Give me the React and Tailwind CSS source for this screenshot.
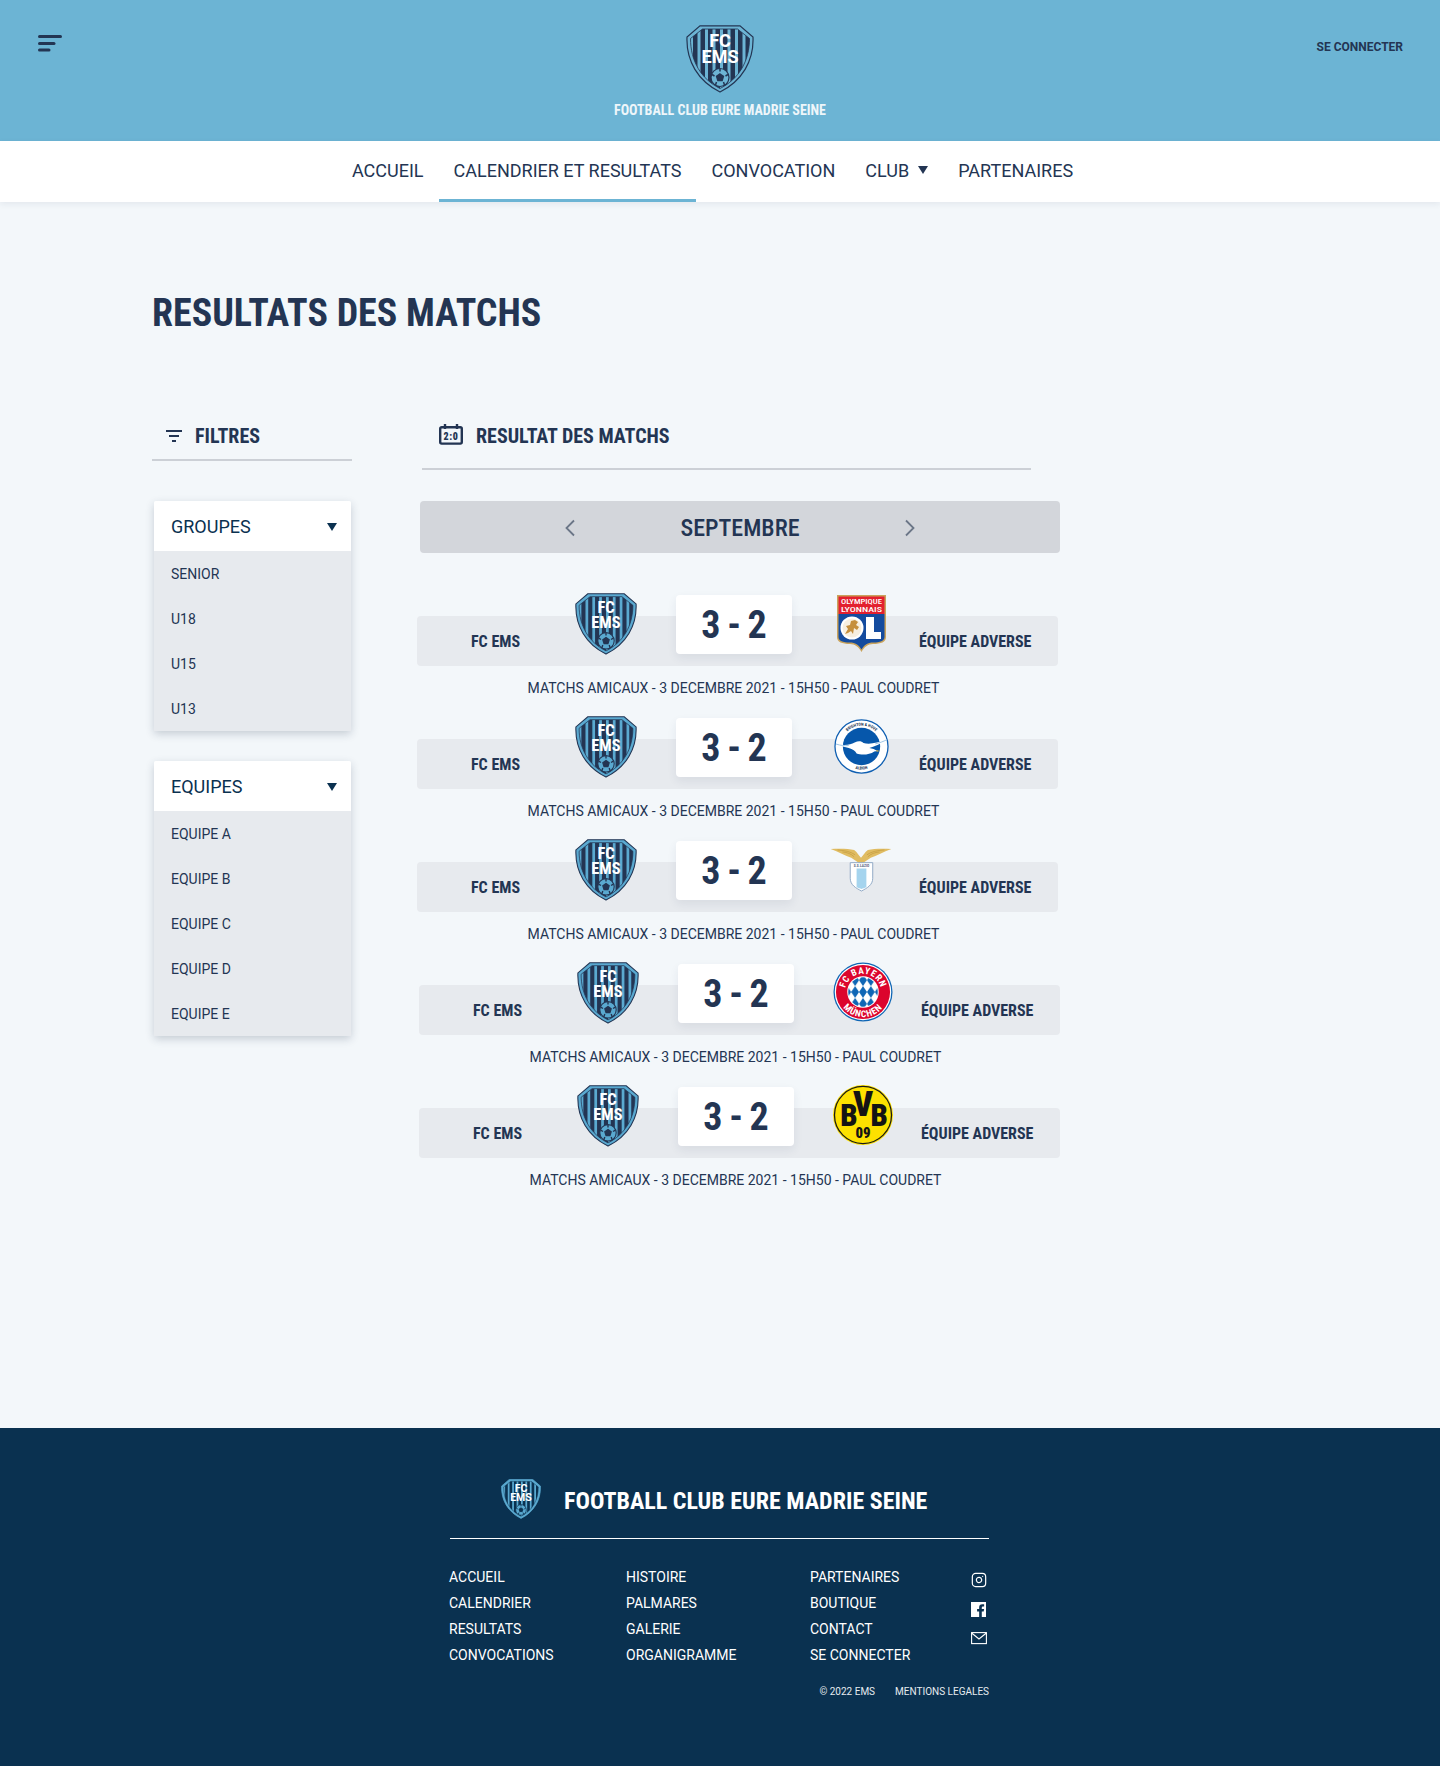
import React from "react";
import { Instagram } from "lucide-react";

const cond = "font-['Roboto',sans-serif] font-bold [font-stretch:75%]";

function Shield({ id, size = 62, dark = "#233553", light = "#5aa9d0", edge = "#233553", band }) {
  const xs = [7, 14.5, 22, 29.5, 37, 44.5, 52, 59.5];
  return (
    <svg width={size} height={size} viewBox="0 0 68 68" className="block shrink-0">
      <defs>
        <clipPath id={id}>
          <path d="M16.500 4 H51.500 L63.500 13.500 C63.500 36 53 54 34 63.500 C15 54 4.500 36 4.500 13.500 Z" />
        </clipPath>
      </defs>
      <path d="M14 .8 H54 L67 12 C68 36 56 56 34 67 C12 56 0 36 1 12 Z" fill={band || light} stroke={edge} strokeWidth="1.200" />
      <g clipPath={`url(#${id})`}>
        <rect x="0" y="0" width="68" height="68" fill={light} />
        {xs.map((x) => (
          <rect key={x} x={x} y="0" width="4.500" height="68" fill={dark} />
        ))}
      </g>
      <path d="M16.500 4 H51.500 L63.500 13.500 C63.500 36 53 54 34 63.500 C15 54 4.500 36 4.500 13.500 Z" fill="none" stroke={dark} strokeWidth=".8" />
      <text x="34" y="22" textAnchor="middle" fontFamily="Roboto, sans-serif" fontWeight="700" fontSize="18" fill="#fff">FC</text>
      <text x="34" y="38" textAnchor="middle" fontFamily="Roboto, sans-serif" fontWeight="700" fontSize="18" fill="#fff">EMS</text>
      <circle cx="34" cy="52.500" r="9" fill={light} stroke={dark} strokeWidth="1.200" />
      <path d="M34 49 l3.400 2.400 -1.300 4 h-4.200 l-1.300 -4 Z M34 44 v2.500 M26 49.500 l2.500 1.500 M42 49.500 l-2.500 1.500 M29.500 60 l1 -3 M38.500 60 l-1 -3" fill={dark} stroke={dark} strokeWidth="1.500" />
    </svg>
  );
}

function Lyon() {
  return (
    <svg width="49" height="57" viewBox="0 0 49 57" className="mt-[3px] block">
      <path d="M0 0 H49 V42 C49 47 44 49 36 49 C31 49 27 52 24.500 57 C22 52 18 49 13 49 C5 49 0 47 0 42 Z" fill="#c9a35c" />
      <path d="M1.500 1.500 H47.500 V19 H1.500 Z" fill="#e3202e" />
      <path d="M1.500 19 H47.500 V42 C47.500 46 43 47.500 36 47.500 C31 47.500 27 50 24.500 54.500 C22 50 18 47.500 13 47.500 C6 47.500 1.500 46 1.500 42 Z" fill="#144b9e" />
      <text x="24.500" y="9.200" textAnchor="middle" textLength="41" lengthAdjust="spacingAndGlyphs" fontFamily="Roboto, sans-serif" fontWeight="500" fontSize="8" fill="#fff">OLYMPIQUE</text>
      <text x="24.500" y="17" textAnchor="middle" textLength="41" lengthAdjust="spacingAndGlyphs" fontFamily="Roboto, sans-serif" fontWeight="500" fontSize="8" fill="#fff">LYONNAIS</text>
      <circle cx="15" cy="33" r="11.500" fill="#fff" />
      <circle cx="15" cy="33" r="9.500" fill="#f7efe0" />
      <path d="M8 39 l3 -5 -2 -3 4 -1 1 -4 4 -1 3 2 -2 3 3 2 -2 3 -3 -2 -1 6 -2 -3 -3 2 Z" fill="#c58f3d" />
      <path d="M29 22 H37 V37 H44 V44 H29 Z" fill="#fff" />
    </svg>
  );
}

function Brighton({ id }) {
  return (
    <svg width="55" height="55" viewBox="0 0 56 56" className="mt-[4px] block">
      <defs>
        <path id={`${id}t`} d="M6.800 28 A21.200 21.200 0 0 1 49.200 28" />
        <path id={`${id}b`} d="M4.500 28 A23.500 23.500 0 0 0 51.500 28" />
      </defs>
      <circle cx="28" cy="28" r="27" fill="#fff" stroke="#0f5fb2" strokeWidth="1.300" />
      <circle cx="28" cy="28" r="19" fill="#0657ab" />
      <text fontFamily="Roboto, sans-serif" fontWeight="700" fontSize="4.200" fill="#233553"><textPath href={`#${id}t`} startOffset="50%" textAnchor="middle">BRIGHTON & HOVE</textPath></text>
      <text fontFamily="Roboto, sans-serif" fontWeight="700" fontSize="4.200" fill="#233553"><textPath href={`#${id}b`} startOffset="50%" textAnchor="middle">ALBION</textPath></text>
      <path d="M3 26 C12 27 17 26.500 21 24 C25 22 28 22.500 30 24.500 C36 26 44 24.500 53 21.500 C48 25 42 28 36 29.500 C39 30 42 31 44 32.500 L41 33 C36 36.500 28 37 23 35 C22 32.500 19 31 15 29.500 C11 28.500 7 27.500 3 26 Z" fill="#fff" />
      <path d="M2 25.500 C7 27 11 27.500 15 27 M54 21 C50 23 46 24.500 42 25.300" fill="none" stroke="#9cc4e4" strokeWidth="1" />
      <path d="M43 31.500 l3.500 1 -3 .8 Z" fill="#e9b73d" />
    </svg>
  );
}

function Lazio() {
  return (
    <svg width="62" height="44" viewBox="0 0 62 45" className="mt-[10px] block shrink-0">
      <path d="M0 1 C8 .5 18 .5 24 2 C27 4 29 8 31 10 C33 8 35 4 38 2 C44 .5 54 .5 62 1 C54 4 47 8 41 10 C38 12 35 14 31 17 C27 14 24 12 21 10 C15 8 8 4 0 1 Z" fill="#e0bc62" />
      <path d="M7 2 C15 2.500 21 4 25 7 M12 4 C17 4.500 21 6 24 9 M55 2 C47 2.500 41 4 37 7 M50 4 C45 4.500 41 6 38 9" stroke="#c39a3c" strokeWidth=".7" fill="none" />
      <path d="M20 15 H43 V31 C43 38 37 41 31.500 44 C26 41 20 38 20 31 Z" fill="#fff" stroke="#8fa9c6" strokeWidth="1" />
      <path d="M26.500 21 H36.500 V40 C34.500 41 33 41.500 31.500 42 C30 41.500 28.500 41 26.500 40 Z" fill="#a5d4ee" />
      <text x="31.500" y="19.500" textAnchor="middle" fontFamily="Roboto, sans-serif" fontWeight="700" fontSize="3.800" fill="#54657e">S.S.LAZIO</text>
    </svg>
  );
}

function Bayern({ id }) {
  return (
    <svg width="60" height="60" viewBox="0 0 61 61" className="mt-[1px] block">
      <defs>
        <pattern id={`${id}p`} width="8" height="12" patternUnits="userSpaceOnUse" x="2.500" y="0.500">
          <rect width="8" height="12" fill="#fff" />
          <path d="M4 0 L8 6 L4 12 L0 6 Z" fill="#0f66b5" />
        </pattern>
        <path id={`${id}t`} d="M30.500 49 A18.500 18.500 0 1 1 30.510 49" />
        <path id={`${id}b`} d="M30.500 5 A25.500 25.500 0 1 0 30.510 5" />
      </defs>
      <circle cx="30.500" cy="30.500" r="30" fill="#0f66b5" />
      <circle cx="30.500" cy="30.500" r="28.700" fill="#fff" />
      <circle cx="30.500" cy="30.500" r="27.500" fill="#dc052d" />
      <circle cx="30.500" cy="30.500" r="16" fill="#fff" />
      <circle cx="30.500" cy="30.500" r="15" fill={`url(#${id}p)`} />
      <text fontFamily="Roboto, sans-serif" fontWeight="700" fontSize="9.500" letterSpacing=".8" fill="#fff"><textPath href={`#${id}t`} startOffset="50%" textAnchor="middle">FC BAYERN</textPath></text>
      <text fontFamily="Roboto, sans-serif" fontWeight="700" fontSize="9.500" letterSpacing=".8" fill="#fff"><textPath href={`#${id}b`} startOffset="50%" textAnchor="middle">MÜNCHEN</textPath></text>
    </svg>
  );
}

function Bvb() {
  return (
    <svg width="60" height="60" viewBox="0 0 61 61" className="mt-[1px] block">
      <circle cx="30.500" cy="30.500" r="30.500" fill="#fde100" />
      <circle cx="30.500" cy="30.500" r="29" fill="#fde100" stroke="#1a1a18" strokeWidth="1.300" />
      <text x="16.300" y="42" textAnchor="middle" fontFamily="Roboto, sans-serif" fontWeight="900" fontSize="31" fill="#141414" style={{ fontStretch: "75%" }}>B</text>
      <text x="30.500" y="31" textAnchor="middle" fontFamily="Roboto, sans-serif" fontWeight="900" fontSize="35" fill="#141414" style={{ fontStretch: "75%" }}>V</text>
      <text x="47" y="42" textAnchor="middle" fontFamily="Roboto, sans-serif" fontWeight="900" fontSize="31" fill="#141414" style={{ fontStretch: "75%" }}>B</text>
      <text x="30.500" y="54" textAnchor="middle" fontFamily="Roboto, sans-serif" fontWeight="900" fontSize="15" fill="#141414" style={{ fontStretch: "75%" }}>09</text>
    </svg>
  );
}

function Tri({ className = "" }) {
  return (
    <svg width="10" height="8" viewBox="0 0 10 8" className={className}>
      <path d="M0 0 H10 L5 8 Z" fill="currentColor" />
    </svg>
  );
}

function Dropdown({ title, items }) {
  return (
    <div className="rounded-[2px] shadow-[0_3px_8px_rgba(35,53,83,0.22)]">
      <div className="flex h-[50px] items-center justify-between rounded-t-[2px] bg-white pl-[17px] pr-[14px] text-[18px] text-[#0a3150]">
        <span>{title}</span>
        <Tri className="mt-[1px]" />
      </div>
      <ul className="bg-[#e7eaee]">
        {items.map((i) => (
          <li key={i} className="flex h-[45px] items-center pl-[17px] pt-[2px] text-[14px] text-[#233553]">{i}</li>
        ))}
      </ul>
    </div>
  );
}

function Match({ n, logo, shifted }) {
  return (
    <div className={`h-[123px] w-[641px] pt-[24px] ${shifted ? "ml-[2px]" : ""}`}>
      <div className={`flex h-[50px] rounded-[4px] bg-[#e7eaee] pl-[54px] ${cond} text-[#233553]`}>
        <span className="w-[104px] self-center pt-[1px] text-[16px]">FC EMS</span>
        <div className="-mt-[23px] w-[62px]"><Shield id={`sh${n}`} /></div>
        <div className="-mt-[21px] ml-[39px] flex h-[59px] w-[116px] items-center justify-center rounded-[4px] bg-white pt-[2px] text-[38px] [word-spacing:-2px] shadow-[0_4px_10px_rgba(35,53,83,0.08)]">3 - 2</div>
        <div className="-mt-[24px] ml-[38px] flex h-[62px] w-[62px] justify-center">{logo}</div>
        <span className="ml-[27px] self-center pt-[1px] text-[16px]">ÉQUIPE ADVERSE</span>
      </div>
      <p className="mt-[12px] pr-[8px] text-center text-[14px] leading-[20px] text-[#233553]">MATCHS AMICAUX - 3 DECEMBRE 2021 - 15H50 - PAUL COUDRET</p>
    </div>
  );
}

const Col = ({ items, className }) => (
  <ul className={className}>
    {items.map((i) => <li key={i} className="h-[26px] leading-[26px]">{i}</li>)}
  </ul>
);

export default function App() {
  return (
    <div className="min-h-[1766px] bg-[#f3f7fa] font-['Roboto',sans-serif] text-[#233553]">
      <header className="grid h-[141px] grid-cols-[1fr_auto_1fr] bg-[#6cb4d4]">
        <div className="pl-[38px] pt-[35px]">
          <svg width="24" height="18" viewBox="0 0 24 18" className="block">
            <g stroke="#233553" strokeWidth="3" strokeLinecap="round">
              <path d="M1.500 1.500 H22.500" />
              <path d="M1.500 8.500 H16" />
              <path d="M1.500 15 H11" />
            </g>
          </svg>
        </div>
        <div className="flex flex-col items-center pt-[25px]">
          <Shield id="hd" size={68} light="#6cb4d4" />
          <div className={`mt-[8px] text-[14px] leading-[18px] text-[#eef6fa] ${cond}`}>FOOTBALL CLUB EURE MADRIE SEINE</div>
        </div>
        <div className="flex justify-end pr-[37px] pt-[39px] text-[12px] font-bold leading-[16px]">SE CONNECTER</div>
      </header>

      <nav className="relative flex h-[61px] justify-center bg-white pr-[15px] text-[18px] shadow-[0_2px_6px_rgba(35,53,83,0.08)]">
        <a className="flex h-full items-center px-[15px] pb-[3px]">ACCUEIL</a>
        <a className="flex h-full items-center border-b-[3px] border-[#6cb4d4] px-[15px]">CALENDRIER ET RESULTATS</a>
        <a className="flex h-full items-center px-[15px] pb-[3px]">CONVOCATION</a>
        <a className="flex h-full items-center gap-[9px] px-[15px] pb-[3px]">CLUB <Tri className="text-[#233553]" /></a>
        <a className="flex h-full items-center px-[15px] pb-[3px]">PARTENAIRES</a>
      </nav>

      <main className="h-[1226px] pl-[152px] pt-[89px]">
        <h1 className={`text-[38px] leading-[44px] ${cond}`}>RESULTATS DES MATCHS</h1>
        <div className="mt-[78px] flex gap-[65px]">
          <aside className="w-[200px]">
            <div className={`flex h-[48px] items-center gap-[12px] border-b-2 border-[#ccd0d6] pl-[13px] text-[20px] ${cond}`}>
              <svg width="18" height="14" viewBox="0 0 18 14" className="block">
                <g stroke="#233553" strokeWidth="2">
                  <path d="M1 2 H17" />
                  <path d="M4 7 H14" />
                  <path d="M7 12 H11" />
                </g>
              </svg>
              FILTRES
            </div>
            <div className="ml-[2px] mt-[40px] flex w-[197px] flex-col gap-[30px]">
              <Dropdown title="GROUPES" items={["SENIOR", "U18", "U15", "U13"]} />
              <Dropdown title="EQUIPES" items={["EQUIPE A", "EQUIPE B", "EQUIPE C", "EQUIPE D", "EQUIPE E"]} />
            </div>
          </aside>
          <section className="w-[645px]">
            <div className={`ml-[5px] flex h-[57px] w-[609px] items-start gap-[13px] border-b-2 border-[#ccd0d6] pl-[17px] pt-[11px] text-[20px] leading-[24px] ${cond}`}>
              <svg width="24" height="21" viewBox="0 0 24 21" className="block">
                <rect x="1.200" y="3.200" width="21.600" height="16.400" rx="1.500" fill="none" stroke="#233553" strokeWidth="2.400" />
                <path d="M6 0 V5 M18 0 V5" stroke="#233553" strokeWidth="2.400" />
                <text x="12" y="15.500" textAnchor="middle" fontFamily="Roboto, sans-serif" fontWeight="900" fontSize="10" letterSpacing=".6" fill="#233553">2:0</text>
              </svg>
              RESULTAT DES MATCHS
            </div>
            <div className="ml-[3px] mt-[31px] flex h-[52px] w-[640px] items-center justify-center gap-[104px] rounded-[4px] bg-[#d3d6db] pt-[1px]">
              <svg width="12" height="18" viewBox="0 0 12 18"><path d="M10 1.500 L2.500 9 L10 16.500" fill="none" stroke="#6b7687" strokeWidth="1.800" /></svg>
              <span className={`w-[120px] text-center text-[24px] ${cond} !font-medium`}>SEPTEMBRE</span>
              <svg width="12" height="18" viewBox="0 0 12 18"><path d="M2 1.500 L9.500 9 L2 16.500" fill="none" stroke="#6b7687" strokeWidth="1.800" /></svg>
            </div>
            <div className="mt-[39px]">
              <Match n={1} logo={<Lyon />} />
              <Match n={2} logo={<Brighton id="br" />} />
              <Match n={3} logo={<Lazio />} />
              <Match n={4} logo={<Bayern id="by" />} shifted />
              <Match n={5} logo={<Bvb />} shifted />
            </div>
          </section>
        </div>
      </main>

      <footer className="h-[338px] bg-[#0a3150] text-white">
        <div className="mx-auto w-[540px] pr-[1px] pt-[51px]">
          <div className="flex h-[60px] items-start border-b border-white pl-[51px]">
            <Shield id="ft" size={40} dark="#0a3150" light="#5aa9d0" edge="#5aa9d0" />
            <span className={`ml-[23px] mt-[6px] text-[24px] leading-[32px] ${cond}`}>FOOTBALL CLUB EURE MADRIE SEINE</span>
          </div>
          <div className="-ml-[1px] mt-[25px] flex text-[14px]">
            <Col className="w-[177px]" items={["ACCUEIL", "CALENDRIER", "RESULTATS", "CONVOCATIONS"]} />
            <Col className="w-[184px]" items={["HISTOIRE", "PALMARES", "GALERIE", "ORGANIGRAMME"]} />
            <Col className="w-[161px]" items={["PARTENAIRES", "BOUTIQUE", "CONTACT", "SE CONNECTER"]} />
            <div className="flex flex-col gap-[14px] pt-[8px]">
              <Instagram size={16} strokeWidth={1.800} />
              <svg width="15" height="15" viewBox="0 0 16 16" className="block">
                <path d="M0 0 H16 V16 H11.500 V10 H13.500 L14 7.500 H11.500 V6 C11.500 5 12 4.700 13 4.700 H14 V2.500 H12 C9.800 2.500 8.700 3.800 8.700 5.800 V7.500 H6.500 V10 H8.700 V16 H0 Z" fill="#fff" />
              </svg>
              <svg width="16" height="14" viewBox="0 0 16 14" className="block">
                <rect x=".6" y="1.600" width="14.800" height="11" fill="none" stroke="#fff" strokeWidth="1.100" />
                <path d="M.6 2 L8 8 L15.400 2" fill="none" stroke="#fff" strokeWidth="1.100" />
              </svg>
            </div>
          </div>
          <div className="mt-[17px] flex justify-end gap-[20px] text-[10px] leading-[14px] text-[#e6ebef]">
            <span>© 2022 EMS</span>
            <span>MENTIONS LEGALES</span>
          </div>
        </div>
      </footer>
    </div>
  );
}
